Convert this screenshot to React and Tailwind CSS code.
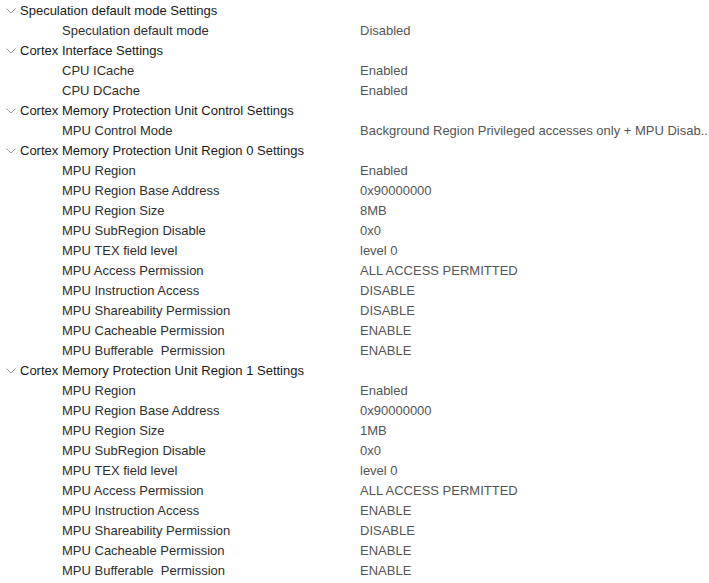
const sections = [
  {
    title: "Speculation default mode Settings",
    rows: [["Speculation default mode", "Disabled"]],
  },
  {
    title: "Cortex Interface Settings",
    rows: [
      ["CPU ICache", "Enabled"],
      ["CPU DCache", "Enabled"],
    ],
  },
  {
    title: "Cortex Memory Protection Unit Control Settings",
    rows: [["MPU Control Mode", "Background Region Privileged accesses only + MPU Disab.."]],
  },
  {
    title: "Cortex Memory Protection Unit Region 0 Settings",
    rows: [
      ["MPU Region", "Enabled"],
      ["MPU Region Base Address", "0x90000000"],
      ["MPU Region Size", "8MB"],
      ["MPU SubRegion Disable", "0x0"],
      ["MPU TEX field level", "level 0"],
      ["MPU Access Permission", "ALL ACCESS PERMITTED"],
      ["MPU Instruction Access", "DISABLE"],
      ["MPU Shareability Permission", "DISABLE"],
      ["MPU Cacheable Permission", "ENABLE"],
      ["MPU Bufferable  Permission", "ENABLE"],
    ],
  },
  {
    title: "Cortex Memory Protection Unit Region 1 Settings",
    rows: [
      ["MPU Region", "Enabled"],
      ["MPU Region Base Address", "0x90000000"],
      ["MPU Region Size", "1MB"],
      ["MPU SubRegion Disable", "0x0"],
      ["MPU TEX field level", "level 0"],
      ["MPU Access Permission", "ALL ACCESS PERMITTED"],
      ["MPU Instruction Access", "ENABLE"],
      ["MPU Shareability Permission", "DISABLE"],
      ["MPU Cacheable Permission", "ENABLE"],
      ["MPU Bufferable  Permission", "ENABLE"],
    ],
  },
];

function Chevron() {
  return (
    <svg width="10" height="6" viewBox="0 0 10 6" className="shrink-0">
      <path d="M0.5 0.5 L5 5 L9.5 0.5" fill="none" stroke="#9a9a9a" strokeWidth="1" />
    </svg>
  );
}

export default function App() {
  return (
    <div
      className="w-[709px] h-[583px] bg-white overflow-hidden text-[13px] whitespace-pre pt-[1px]"
      style={{ fontFamily: '"Liberation Sans", Arial, sans-serif' }}
    >
      {sections.map((s) => (
        <div key={s.title}>
          <div className="h-5 flex items-center">
            <div className="w-5 flex items-center justify-center pl-[2px]">
              <Chevron />
            </div>
            <span className="text-[#1a1a1a]">{s.title}</span>
          </div>
          {s.rows.map(([label, value], i) => (
            <div key={i} className="h-5 flex items-center">
              <span className="w-[360px] pl-[62px] text-[#2e2e2e]">{label}</span>
              <span className="text-[#555555]">{value}</span>
            </div>
          ))}
        </div>
      ))}
    </div>
  );
}
